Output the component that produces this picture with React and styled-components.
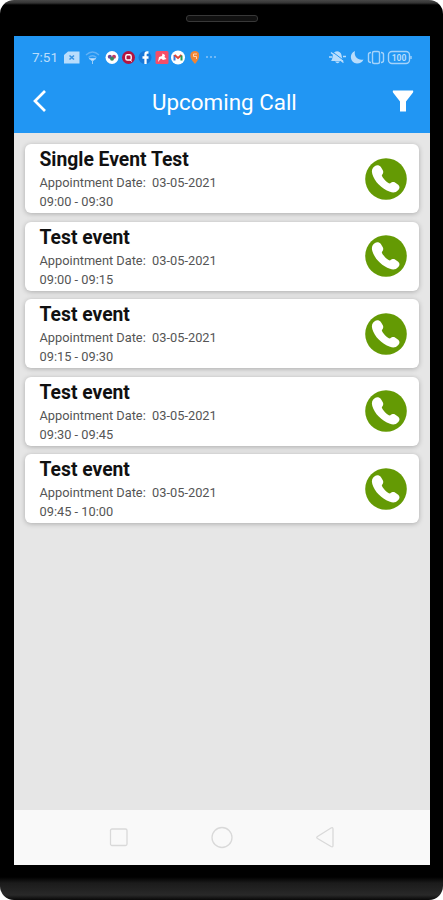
import React from "react";
import styled, {createGlobalStyle} from "styled-components";

const events = [
    {title: "Single Event Test", date: "03-05-2021", time: "09:00 - 09:30"},
    {title: "Test event", date: "03-05-2021", time: "09:00 - 09:15"},
    {title: "Test event", date: "03-05-2021", time: "09:15 - 09:30"},
    {title: "Test event", date: "03-05-2021", time: "09:30 - 09:45"},
    {title: "Test event", date: "03-05-2021", time: "09:45 - 10:00"},
]

const StatusBar = () => (
    <Status>
        <Clock>7:51</Clock>
        <NoticeIcons width="156" height="16" viewBox="0 0 156 16">
            {/* saved card */}
            <path d="M4 2.5H15.500V14.5H0V6Z" fill="#b9ddfc"/>
            <path d="M5.5 6.5L10 10.5M10 6.5L5.5 10.5" stroke="#3793e4" strokeWidth="1.6"/>
            {/* wifi */}
            <path d="M22 6Q28.500 0 35 6M24.500 8.500Q28.500 5 32.500 8.500" fill="none" stroke="#62b2f6" strokeWidth="1.3"/>
            <path d="M25 9.500H32L28.500 12ZM28.500 11V15" fill="#c8e5fd" stroke="#9bcdf9"/>
            {/* app notifications */}
            <circle cx="48" cy="8.500" r="6.500" fill="#fff"/>
            <circle cx="45.800" cy="7.800" r="2" fill="#6b4b9b"/>
            <circle cx="50" cy="7.800" r="2" fill="#c03d67"/>
            <circle cx="48" cy="9.800" r="2" fill="#398860"/>
            <circle cx="64.500" cy="8.500" r="6.500" fill="#b31440"/>
            <rect x="61.800" y="5.800" width="5.400" height="5.200" rx="1.600" fill="none" stroke="#fff" strokeWidth="1.400"/>
            <path d="M66 11L68 12.500" stroke="#fff"/>
            <circle cx="81" cy="8.500" r="6.500" fill="#1877d8"/>
            <path d="M84.500 3.500H83Q81.500 3.500 81.500 5.500V15M78.500 8.500H84.500" fill="none" stroke="#fff" strokeWidth="2.300"/>
            <rect x="91.500" y="2" width="13" height="13" rx="1.500" fill="#f64e68"/>
            <path d="M94 13L95 8L98 7L98.500 4.500L101 6L100.500 8L102.500 10L99 11L97 9.500Z" fill="#fff"/>
            <circle cx="114" cy="8.500" r="7" fill="#fff"/>
            <path d="M110.500 11.500V6" stroke="#3c78dc" strokeWidth="2"/>
            <path d="M110.500 6L114 9L117.500 6" fill="none" stroke="#e44436" strokeWidth="2"/>
            <path d="M117.500 6.500V11.500" stroke="#2b9c56" strokeWidth="2"/>
            <path d="M131 15C126.500 10 126 7.500 126.500 5C127.500 1 134.500 1 135 5C135.500 9 134 11.500 131 15Z" fill="#ef8534"/>
            <path d="M133 5H129.500V7.500H132.500V10" fill="none" stroke="#ffd5b3"/>
            <path d="M142 8H144M146 8H148M150 8H152" stroke="#8ac4f8" strokeWidth="1.500"/>
        </NoticeIcons>
        <SystemIcons width="86" height="16" viewBox="0 0 86 16">
            {/* muted bell */}
            <path d="M3 12C5 10 4 7 5.500 4.500C7.500 1 12.500 2 13.500 6C14 9 14 10 16 12ZM7 12.500H12Q9.500 16 7 12.500Z" fill="#b9ddfc"/>
            <path d="M4 2.500L16.500 12" stroke="#2196f3"/>
            <path d="M3 3.500L15.500 13.500M1 8H4M15 7.500H18" stroke="#b9ddfc" strokeWidth="1.500"/>
            <path d="M27 2C20.500 4.500 22 14 29 14.500C32 14.500 34.500 13 35.500 10.500C30.500 12 25.500 7.500 27 2Z" fill="#b9ddfc"/>
            <g fill="none" stroke="#a5d3fa" strokeWidth="1.400">
                <rect x="44.500" y="2.500" width="7" height="12" rx="1.500"/>
                <path d="M43 3.500Q40.500 3.500 40.500 5.500V11.500Q40.500 13.500 43 13.500M53 3.500Q55.500 3.500 55.500 5.500V11.500Q55.500 13.500 53 13.500"/>
                <rect x="60.500" y="2.500" width="21" height="12" rx="3.500"/>
                <path d="M83 7V10"/>
            </g>
            <BatteryText x="71" y="11.500" textAnchor="middle">100</BatteryText>
        </SystemIcons>
    </Status>
)

const CallCard = ({event}) => (
    <Card>
        <Details>
            <EventTitle>{event.title}</EventTitle>
            <Line>Appointment Date:&nbsp; {event.date}</Line>
            <Line>{event.time}</Line>
        </Details>
        <CallButton aria-label="Call">
            <svg width="42" height="42" viewBox="0 0 42 42">
                <circle cx="21" cy="21" r="20.800" fill="#649a04"/>
                <path
                    d="M10 8C12 6.800 14.500 7.300 16 9.300L17.800 12.300C18.700 14 18.300 15.500 16.800 17.200C17 19.500 22.500 25.300 25 25.500C27 24 28.500 23.700 30 24.500L33.200 26.700C35 28.300 34.800 30.500 33.300 32C31 34.700 28 35 25 33.800C16.500 30.800 9.500 23.500 7.300 16C6.300 12.500 7.200 9.500 10 8Z"
                    fill="#fff"/>
            </svg>
        </CallButton>
    </Card>
)

export default function App() {
    return (
        <>
            <GlobalStyle/>
            <Phone>
                <Top>
                    <Speaker/>
                </Top>
                <Screen>
                    <Header>
                        <StatusBar/>
                        <TitleBar>
                            <svg width="14" height="24" viewBox="0 0 14 24">
                                <path d="M13 2L3 12L13 22" fill="none" stroke="#fff" strokeWidth="2.700"/>
                            </svg>
                            <Title>Upcoming Call</Title>
                            <svg width="22" height="22" viewBox="0 0 22 22">
                                <path d="M1 0.500H21Q21.500 1.500 21 2.500L14 11.500V21.500H8V11.500L1 2.500Q0.500 1.500 1 0.500Z" fill="#fff"/>
                            </svg>
                        </TitleBar>
                    </Header>
                    <List>
                        {events.map((event) => (
                            <CallCard key={event.time} event={event}/>
                        ))}
                    </List>
                    <Navigation>
                        <svg width="226" height="24" viewBox="0 0 226 24" fill="none" stroke="#d9d9d9" strokeWidth="1.300">
                            <rect x="1.500" y="3" width="16.500" height="16.500" rx="1.500"/>
                            <circle cx="113" cy="11.500" r="10"/>
                            <path d="M224 3V19.500Q224 21.500 222 20.500L208.500 12.500Q207 11.500 208.500 10.500L222 2Q224 1 224 3Z"/>
                        </svg>
                    </Navigation>
                </Screen>
            </Phone>
        </>
    );
}

const GlobalStyle = createGlobalStyle`
  body {
    margin: 0;
    background: #fff;
    font-family: Roboto, sans-serif;
  }
`
const Phone = styled.div`
  box-sizing: border-box;
  width: 443px;
  height: 900px;
  padding: 0 13px 0 14px;
  overflow: hidden;
  border-radius: 14px;
  background: linear-gradient(#484848 0, #333 3px, #000 5px, #000 877px, #1b1b1b 883px, #292929 895px, #080808 900px);
`
const Top = styled.div`
  height: 36px;
  display: flex;
  justify-content: center;
`
const Speaker = styled.div`
  box-sizing: border-box;
  width: 72px;
  height: 7px;
  margin-top: 15px;
  border: 1px solid #383838;
  border-radius: 3px;
  background: #111;
`
const Screen = styled.div`
  height: 829px;
  display: flex;
  flex-direction: column;
  background: #e6e6e6;
`
const Header = styled.div`
  box-sizing: border-box;
  height: 97px;
  flex-shrink: 0;
  padding-top: 13px;
  background: #2196f3;
`
const Status = styled.div`
  height: 16px;
  display: flex;
  align-items: center;
  padding: 0 16px 0 18px;
`
const Clock = styled.div`
  width: 32px;
  font-size: 13.5px;
  line-height: 16px;
  color: #b9ddfc;
`
const NoticeIcons = styled.svg`
  flex-shrink: 0;
`
const SystemIcons = styled.svg`
  flex-shrink: 0;
  margin-left: auto;
`
const BatteryText = styled.text`
  font-size: 8.5px;
  font-weight: 700;
  fill: #b9ddfc;
`
const TitleBar = styled.div`
  box-sizing: border-box;
  height: 46px;
  margin-top: 13px;
  padding: 0 16px 0 18px;
  display: flex;
  align-items: center;
`
const Title = styled.div`
  margin: 1px auto 0 106px;
  font-size: 22.4px;
  line-height: 28px;
  color: #fff;
`
const List = styled.div`
  flex: 1;
  display: flex;
  flex-direction: column;
  gap: 8.5px;
  padding: 11px 11px 0;
`
const Card = styled.div`
  box-sizing: border-box;
  height: 69px;
  display: flex;
  align-items: center;
  justify-content: space-between;
  padding: 0 12px 0 14.5px;
  border-radius: 6px;
  background: #fff;
  box-shadow: 0 1px 5px rgba(0, 0, 0, 0.25);
`
const Details = styled.div`
  padding-top: 1px;
`
const EventTitle = styled.div`
  font-size: 19.3px;
  line-height: 26px;
  font-weight: 700;
  color: #111;
`
const Line = styled.div`
  font-size: 12.8px;
  line-height: 19px;
  color: #555;
`
const CallButton = styled.button`
  padding: 0;
  border: 0;
  background: none;
  display: flex;
`
const Navigation = styled.div`
  height: 55px;
  flex-shrink: 0;
  display: flex;
  align-items: center;
  justify-content: center;
  background: #f9f9f9;
`
